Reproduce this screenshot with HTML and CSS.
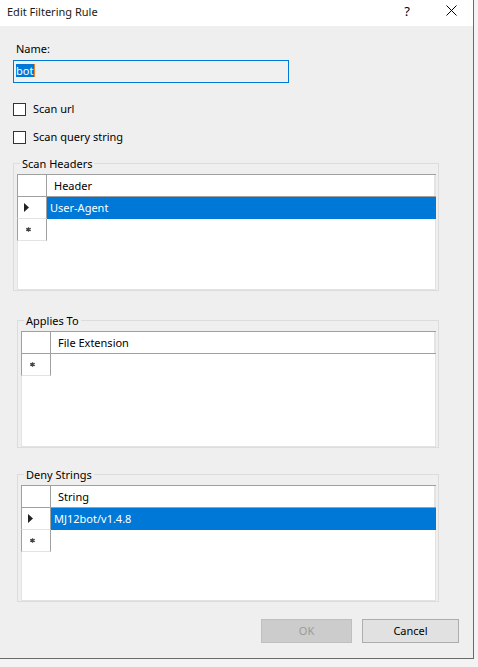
FILE: index.html
```html
<!DOCTYPE html>
<html>
<head>
<meta charset="utf-8">
<title>Edit Filtering Rule</title>
<link rel="stylesheet" href="styles.css">
</head>
<body>
<div class="window">
  <div class="titlebar">
    <span class="title">Edit Filtering Rule</span>
    <span class="help">?</span>
    <span class="close"><svg width="11" height="11" viewBox="0 0 11 11"><path d="M0.5 0.5L10.5 10.5M10.5 0.5L0.5 10.5" stroke="#000" stroke-width="1" fill="none"/></svg></span>
  </div>
  <div class="content">
    <div class="name-label">Name:</div>
    <div class="textbox"><span class="sel">bot</span></div>
    <div class="check first"><span class="box"></span><span>Scan url</span></div>
    <div class="check second"><span class="box"></span><span>Scan query string</span></div>

    <fieldset class="group g1">
      <legend>Scan Headers</legend>
      <div class="grid">
        <div class="row head"><div class="rh"></div><div class="cell hcell">Header</div></div>
        <div class="row sel-row"><div class="rh tri"><svg width="5" height="9" viewBox="0 0 5 9"><path d="M0 0L5 4.5L0 9Z" fill="#222"/></svg></div><div class="cell">User-Agent</div></div>
        <div class="row"><div class="rh star"><svg width="5" height="5" viewBox="0 0 5 5"><path d="M2.5 0.2V4.8M0.3 1.3L4.7 3.7M0.3 3.7L4.7 1.3" stroke="#444" stroke-width="1.3"/></svg></div><div class="cell"></div></div>
      </div>
    </fieldset>

    <fieldset class="group g2">
      <legend>Applies To</legend>
      <div class="grid">
        <div class="row head"><div class="rh"></div><div class="cell hcell">File Extension</div></div>
        <div class="row"><div class="rh star"><svg width="5" height="5" viewBox="0 0 5 5"><path d="M2.5 0.2V4.8M0.3 1.3L4.7 3.7M0.3 3.7L4.7 1.3" stroke="#444" stroke-width="1.3"/></svg></div><div class="cell"></div></div>
      </div>
    </fieldset>

    <fieldset class="group g3">
      <legend>Deny Strings</legend>
      <div class="grid">
        <div class="row head"><div class="rh"></div><div class="cell hcell">String</div></div>
        <div class="row sel-row"><div class="rh tri"><svg width="5" height="9" viewBox="0 0 5 9"><path d="M0 0L5 4.5L0 9Z" fill="#222"/></svg></div><div class="cell">MJ12bot/v1.4.8</div></div>
        <div class="row"><div class="rh star"><svg width="5" height="5" viewBox="0 0 5 5"><path d="M2.5 0.2V4.8M0.3 1.3L4.7 3.7M0.3 3.7L4.7 1.3" stroke="#444" stroke-width="1.3"/></svg></div><div class="cell"></div></div>
      </div>
    </fieldset>

    <div class="buttons">
      <button class="btn ok" disabled>OK</button>
      <button class="btn cancel">Cancel</button>
    </div>
  </div>
</div>
</body>
</html>
```

FILE: styles.css
```css
* { box-sizing: border-box; }

html, body {
  margin: 0;
  padding: 0;
}

body {
  background: #f3f3f3;
  font-family: "Noto Sans", "Open Sans", sans-serif;
  font-size: 11px;
  color: #000;
  width: 478px;
  height: 667px;
  overflow: hidden;
}

.window {
  width: 474px;
  height: 659px;
  background: #efefef;
  border-right: 1px solid #6a6a6a;
  border-bottom: 1px solid #6a6a6a;
  display: flex;
  flex-direction: column;
}

.titlebar {
  height: 26px;
  flex: none;
  background: #fff;
  display: flex;
  align-items: flex-start;
  padding-left: 7px;
  padding-top: 4px;
  line-height: 15px;
}

.title {
  flex: 1;
  color: #1a1a1a;
}

.help {
  width: 14px;
  text-align: center;
  margin-right: 15px;
  font-size: 13px;
  line-height: 14px;
}

.close {
  width: 44px;
  display: flex;
  justify-content: center;
  padding-top: 1px;
}

.content {
  flex: 1;
  display: flex;
  flex-direction: column;
  align-items: flex-start;
}

.name-label {
  margin-top: 16px;
  margin-left: 16px;
  line-height: 14px;
}

.textbox {
  margin-top: 4px;
  margin-left: 13px;
  width: 276px;
  height: 23px;
  border: 1px solid #0078d7;
  background: #f0f0f0;
  padding: 3px 0 0 2px;
  line-height: 13px;
  display: flex;
}

.sel {
  background: #0078d7;
  color: #fff;
  height: 13px;
  padding: 0 1px 0 0;
  border-right: 1px solid #e8822a;
}

.check {
  margin-left: 13px;
  height: 14px;
  display: flex;
  align-items: center;
  line-height: 14px;
}

.check.first { margin-top: 19px; }
.check.second { margin-top: 14px; }

.box {
  width: 13px;
  height: 13px;
  border: 1px solid #333;
  background: #fff;
  margin-right: 7px;
  flex: none;
}

.group {
  margin: 0;
  border: 1px solid #dcdcdc;
  padding: 3px 2px 0 3px;
  min-width: 0;
}

.group legend {
  padding: 0 2px;
  margin-left: 3px;
  line-height: 15px;
}

.g1 {
  margin-top: 12px;
  margin-left: 13px;
  width: 426px;
}

.g2 {
  margin-top: 22px;
  margin-left: 17px;
  width: 422px;
}

.g3 {
  margin-top: 19px;
  margin-left: 17px;
  width: 422px;
}

.grid {
  height: 116px;
  width: 100%;
  background: #fff;
  box-shadow: inset 1px 0 #e3e3e3, inset -1px 0 #e3e3e3, inset 0 -1px #e3e3e3;
  display: flex;
  flex-direction: column;
}

.row {
  display: flex;
  height: 22px;
  flex: none;
}

.row.head {
  height: 23px;
  border-top: 1px solid #a0a0a0;
  border-bottom: 1px solid #a0a0a0;
}

.rh {
  width: 30px;
  flex: none;
  background: #fff;
  border-left: 1px solid #a0a0a0;
  border-right: 1px solid #a0a0a0;
  border-bottom: 1px solid #e3e3e3;
  display: flex;
  align-items: center;
}

.row.head .rh {
  border-bottom: none;
}

.rh.tri { padding-left: 6px; }
.rh.star { padding-left: 8px; }

.cell {
  flex: 1;
  padding-left: 3px;
  line-height: 22px;
  white-space: nowrap;
}

.hcell {
  padding-left: 7px;
  line-height: 21px;
  border-right: 1px solid #e3e3e3;
  margin-right: 1px;
}

.sel-row .cell {
  background: #0078d7;
  color: #fff;
}

.buttons {
  margin-top: 17px;
  align-self: stretch;
  display: flex;
  justify-content: flex-end;
  gap: 10px;
  padding-right: 14px;
}

.btn {
  height: 24px;
  font-family: "Noto Sans", "Open Sans", sans-serif;
  font-size: 11px;
  padding: 0;
  line-height: 20px;
}

.ok {
  width: 91px;
  background: #cccccc;
  border: 1px solid #bfbfbf;
  color: #9a9a9a;
}

.cancel {
  width: 97px;
  background: #e1e1e1;
  border: 1px solid #adadad;
  color: #000;
}
```
